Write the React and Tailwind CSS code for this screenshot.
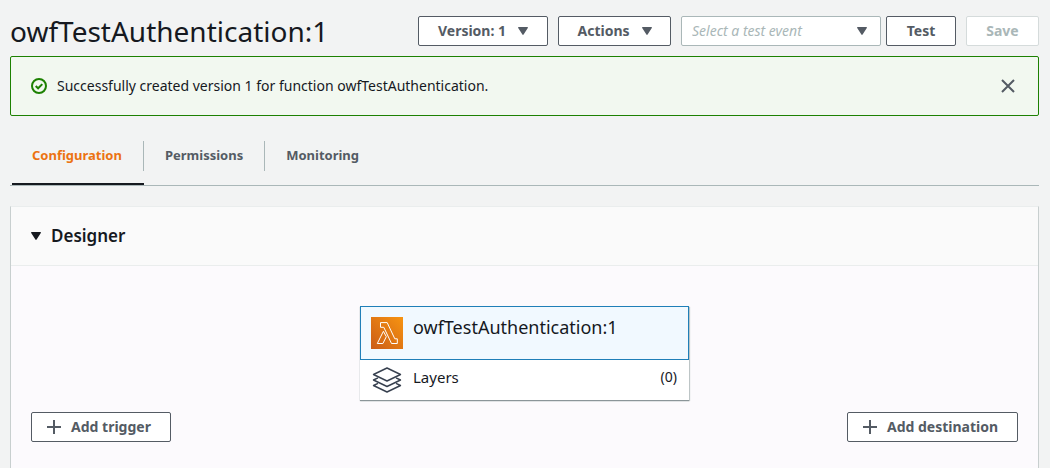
import React from "react";

function Caret({ className = "" }) {
  return (
    <svg viewBox="0 0 10 8" className={`h-2 w-2.5 shrink-0 fill-current ${className}`} aria-hidden="true">
      <path d="M0.6 0h8.8c.5 0 .7.5.4.9L5.6 7.6c-.3.4-.9.4-1.2 0L.2.9C-.1.5.1 0 .6 0z" />
    </svg>
  );
}

function Button({ className = "", children, ...props }) {
  return (
    <button
      type="button"
      className={`flex h-[30px] items-center justify-center whitespace-nowrap rounded-xs border bg-white text-sm font-bold ${className}`}
      {...props}
    >
      {children}
    </button>
  );
}

function Plus() {
  return (
    <svg viewBox="0 0 14 14" className="h-3.5 w-3.5 fill-none stroke-current stroke-2" aria-hidden="true">
      <path d="M7 0v14M0 7h14" />
    </svg>
  );
}

function LambdaIcon() {
  return (
    <svg viewBox="0 0 32 32" className="h-8 w-8 shrink-0" aria-hidden="true">
      <defs>
        <linearGradient id="lambda-fill" x1="0" y1="1" x2="1" y2="0">
          <stop offset="0" stopColor="#cb5c17" />
          <stop offset="1" stopColor="#f79411" />
        </linearGradient>
      </defs>
      <path fill="url(#lambda-fill)" d="M0 0h32v32H0z" />
      <g fill="none" stroke="#fff" strokeWidth="1" strokeLinejoin="round">
        <path d="M12.4 14.3 6.3 26.5h5.6l3.4-6.8z" />
        <path d="M9.5 5.6v4.7h3.3l7.7 16.2h5.8v-4.7h-2.5L16.2 5.6z" />
      </g>
    </svg>
  );
}

function LayersIcon() {
  return (
    <svg
      viewBox="0 0 30 28"
      className="h-7 w-[30px] fill-none stroke-[#37404f]"
      strokeWidth="1.4"
      strokeLinejoin="round"
      aria-hidden="true"
    >
      <path d="M15 2 28.5 8.5 15 15 1.5 8.5z" />
      <path d="M6 11.8 1.5 14 15 20.5 28.5 14 24 11.8" />
      <path d="M6 17.3 1.5 19.5 15 26 28.5 19.5 24 17.3" />
    </svg>
  );
}

const tabs = ["Configuration", "Permissions", "Monitoring"];

export default function App() {
  return (
    <div className="flex min-h-screen flex-col bg-[#f2f3f3] pl-2.5 pr-[11px] font-['Noto_Sans',sans-serif] text-[#16191f]">
      <header className="flex h-14 items-center justify-between pt-1.5">
        <h1 className="text-[28px] leading-9">owfTestAuthentication:1</h1>
        <div className="flex items-center text-[#545b64]">
          <Button className="w-[130px] gap-3 border-[#545b64]" aria-haspopup="menu">
            Version: 1 <Caret />
          </Button>
          <Button className="ml-2.5 w-[113px] gap-3 border-[#545b64]" aria-haspopup="menu">
            Actions <Caret />
          </Button>
          <div className="ml-2.5 grid w-[200px] items-center">
            <select
              aria-label="Test event"
              className="col-start-1 row-start-1 h-[30px] w-full appearance-none rounded-xs border border-[#aab7b8] bg-white px-2.5 text-sm italic text-[#aab7b8]"
            >
              <option>Select a test event</option>
            </select>
            <Caret className="pointer-events-none col-start-1 row-start-1 mr-3.5 justify-self-end" />
          </div>
          <Button className="ml-[5px] w-[70px] border-[#545b64]">Test</Button>
          <Button className="ml-2.5 w-[73px] border-[#d5dbdb] text-[#aab7b8]" disabled>
            Save
          </Button>
        </div>
      </header>

      <div role="status" className="flex h-15 items-center rounded-xs border border-[#1d8102] bg-[#f2f8f0] px-5">
        <svg viewBox="0 0 16 16" className="h-4 w-4 fill-none stroke-[#1d8102] stroke-2" aria-hidden="true">
          <circle cx="8" cy="8" r="7" />
          <path d="m4.7 8 2.4 2.3 4.2-4.2" />
        </svg>
        <p className="ml-2.5 flex-1 text-sm">Successfully created version 1 for function owfTestAuthentication.</p>
        <button type="button" aria-label="Dismiss" className="py-1 pl-1 pr-[3px] text-[#545b64]">
          <svg viewBox="0 0 14 14" className="h-3.5 w-3.5 fill-none stroke-current stroke-2" aria-hidden="true">
            <path d="m1 1 12 12M13 1 1 13" />
          </svg>
        </button>
      </div>

      <div role="tablist" className="mt-2.5 flex h-15 items-stretch border-b border-[#aab7b8] pl-0.5">
        {tabs.map((tab, i) => (
          <button
            key={tab}
            type="button"
            role="tab"
            aria-selected={i === 0}
            className={`flex items-center border-b-2 pt-0.5 text-[13px] font-bold ${
              i === 0 ? "border-[#16191f] text-[#ec7211]" : "border-transparent text-[#545b64]"
            }`}
          >
            <span
              className={`flex h-[30px] items-center pr-[21px] ${i === 0 ? "pl-5" : "pl-[21px]"} ${
                i < 2 ? "border-r border-[#aab7b8]" : ""
              }`}
            >
              {tab}
            </span>
          </button>
        ))}
      </div>

      <section className="mt-5 flex-1 border-x border-t border-x-[#c8cfcf] border-t-[#eaeded] bg-[#fcfafd]">
        <h2 className="border-b border-[#eaeded] bg-[#fafafa] px-5">
          <button
            type="button"
            aria-expanded="true"
            className="flex h-[58px] items-center gap-2.5 text-[17px] font-semibold"
          >
            <Caret /> Designer
          </button>
        </h2>
        <div className="px-5 pb-6 pt-10">
          <div className="mx-auto w-[329px] bg-white shadow-[0_1px_1px_0_#8b9599,1px_1px_1px_0_#c8cfcf]">
            <button
              type="button"
              className="flex h-[54px] w-full items-start gap-2.5 border border-[#1f7fb8] bg-[#f1f9ff] p-2.5 text-left text-lg leading-5"
            >
              <LambdaIcon />
              <span>owfTestAuthentication:1</span>
            </button>
            <button type="button" className="flex h-10 w-full items-center px-3 text-left text-[15px]">
              <LayersIcon />
              <span className="ml-[11px] flex-1 pb-1.5">Layers</span>
              <span className="pb-1.5 text-sm">(0)</span>
            </button>
          </div>
          <div className="mt-3 flex justify-between text-[#545b64]">
            <Button className="w-[140px] gap-2.5 border-[#545b64] pr-1">
              <Plus /> Add trigger
            </Button>
            <Button className="w-[171px] gap-2.5 border-[#545b64] pr-1">
              <Plus /> Add destination
            </Button>
          </div>
        </div>
      </section>
    </div>
  );
}
